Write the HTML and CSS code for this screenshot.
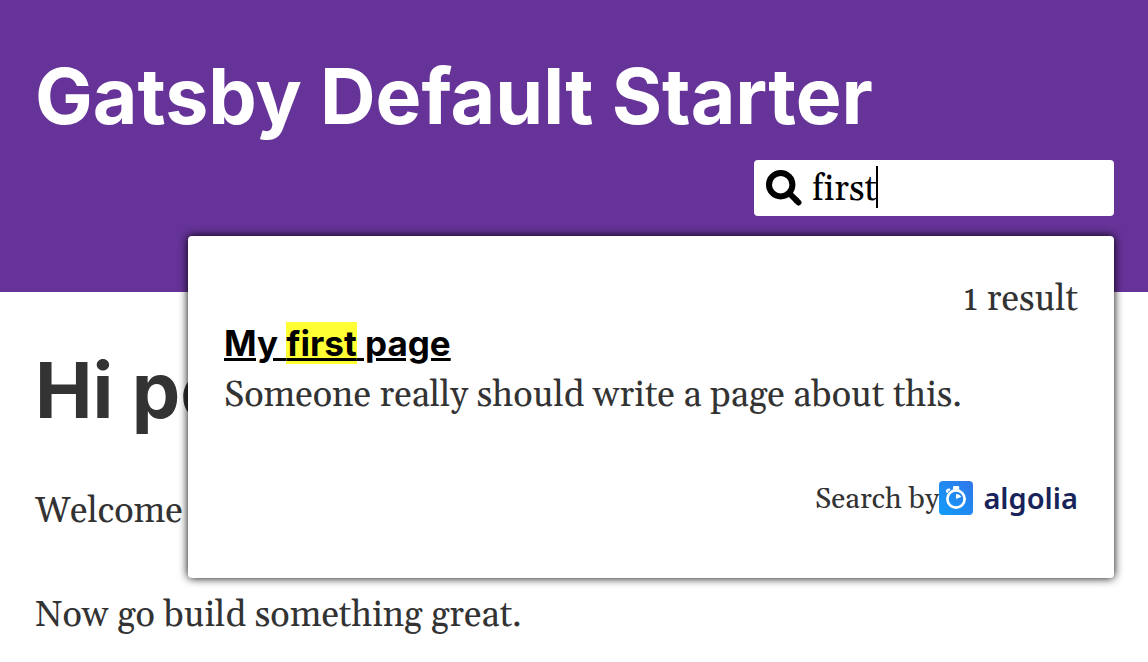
FILE: index.html
```
<!DOCTYPE html>
<html lang="en">
<head>
<meta charset="utf-8">
<title>Gatsby Default Starter</title>
<link rel="stylesheet" href="styles.css">
</head>
<body>
<header class="site-header">
  <h1 class="site-title"><a href="#">Gatsby Default Starter</a></h1>
  <div class="search">
    <form class="search-form">
      <svg class="search-icon" viewBox="0 0 36 36" aria-hidden="true"><g fill="none" stroke="#000"><circle cx="14.700" cy="14.700" r="11.700" stroke-width="6"/><path d="M23 23l8 8" stroke-width="6"/><path d="M30.800 30.800l1.700 1.700" stroke-width="6" stroke-linecap="round"/></g></svg>
      <input class="search-input" type="text" aria-label="Search" value="first" autocomplete="off" spellcheck="false">
      <span class="caret"></span>
    </form>
    <section class="results">
      <p class="result-count">1 result</p>
      <h3 class="hit-title"><a href="#">My <mark>first</mark> page</a></h3>
      <p class="hit-text">Someone really should write a page about this.</p>
      <div class="powered">Search by<a class="algolia" href="#"><svg class="algolia-icon" viewBox="0 0 34 34" aria-hidden="true"><defs><linearGradient id="blue" x1="0" y1="1" x2="1" y2="0"><stop offset="0" stop-color="#129cf8"/><stop offset="1" stop-color="#3077ea"/></linearGradient></defs><rect width="34" height="34" rx="4" fill="url(#blue)"/><circle cx="17" cy="18" r="8.600" fill="none" stroke="#fff" stroke-width="2.700"/><path d="M14 8.800V6.200Q14 5 15.200 5h3.800q1.200 0 1.200 1.200v2.600z" fill="#fff"/><path d="M8.300 10.800q-.8-2.400 2-2.200" fill="none" stroke="#fff" stroke-width="2.200" stroke-linecap="round"/><path d="M17 18v-4.600q0-.6.600-.5 3 .3 4.500 2.500.3.500-.2.700z" fill="#fff"/></svg><span>algolia</span></a></div>
    </section>
  </div>
</header>
<main class="content">
  <h1 class="page-title">Hi people</h1>
  <p>Welcome to your new Gatsby site.</p>
  <p>Now go build something great.</p>
</main>
</body>
</html>
```
FILE: styles.css
```
* { box-sizing: border-box; }
body { margin: 0; background: #fff; color: #333; font: 36px/52px Gelasio, Georgia, "DejaVu Serif", serif; font-variant-ligatures: no-common-ligatures; }
a { color: inherit; }
p { margin: 0; }
.site-header { background: #663399; padding: 52px 34px 76px 35px; }
.site-title { margin: 0; font: 700 77px/88px Inter, sans-serif; color: #fff; }
.site-title a { text-decoration: none; }
.search { position: relative; display: flex; justify-content: flex-end; margin-top: 20px; }
.search-form { position: relative; display: flex; align-items: center; width: 360px; height: 56px; padding: 0 12px; gap: 10px; background: #fff; border-radius: 4px; }
.search-icon { width: 36px; height: 36px; flex: none; }
.search-input { flex: 1; min-width: 0; height: 56px; padding: 2px 0 0; border: 0; outline: 0; background: none; font: inherit; font-variant-ligatures: no-common-ligatures; color: #000; }
/* text cursor, drawn over the field after the typed word */
.caret { position: absolute; left: 122px; top: 6px; width: 2px; height: 42px; background: #000; }
.results { position: absolute; right: 0; top: 76px; width: 926px; padding: 40px 36px 52px; background: #fff; border-radius: 4px; box-shadow: 0 0 10px #000; z-index: 1; }
.result-count { text-align: right; line-height: 48px; }
.hit-title { margin: 0; font: 700 35px/38px Inter, sans-serif; color: #000; }
.hit-title mark { background: #ff3; color: inherit; }
.hit-text { margin-top: 8px; }
.powered { display: flex; align-items: center; justify-content: flex-end; margin-top: 52px; font-size: 29px; }
.algolia { display: flex; align-items: center; gap: 10px; margin-bottom: 4px; color: #182359; text-decoration: none; font: 600 29px/38px "Noto Sans", sans-serif; }
.algolia-icon { width: 34px; height: 34px; }
.content { padding: 54px 35px 0; }
.page-title { margin: 0 0 52px; font: 700 77px/88px Inter, sans-serif; }
.content p + p { margin-top: 52px; }
```
